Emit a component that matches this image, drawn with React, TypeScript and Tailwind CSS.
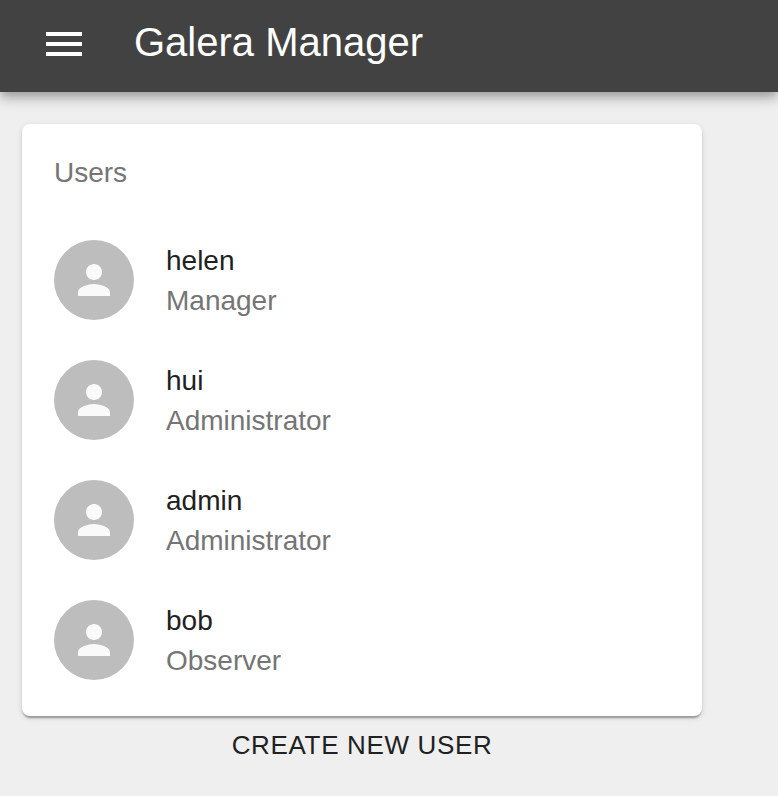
import { useState } from 'react';

const users = [
  { name: 'helen', role: 'Manager' },
  { name: 'hui', role: 'Administrator' },
  { name: 'admin', role: 'Administrator' },
  { name: 'bob', role: 'Observer' },
];

function MenuIcon() {
  return (
    <svg viewBox="0 0 24 24" className="size-12 fill-current" aria-hidden="true">
      <path d="M3 18h18v-2H3v2zm0-5h18v-2H3v2zm0-7v2h18V6H3z" />
    </svg>
  );
}

function PersonIcon() {
  return (
    <svg viewBox="0 0 24 24" className="size-12 fill-current" aria-hidden="true">
      <path d="M12 12c2.21 0 4-1.79 4-4s-1.79-4-4-4-4 1.79-4 4 1.79 4 4 4zm0 2c-2.67 0-8 1.34-8 4v2h16v-2c0-2.66-5.33-4-8-4z" />
    </svg>
  );
}

function UserRow({ name, role }: { name: string; role: string }) {
  return (
    <li className="flex h-30 items-center gap-8 px-8">
      <span className="flex size-20 shrink-0 items-center justify-center rounded-full bg-[#bdbdbd] text-[#fafafa]">
        <PersonIcon />
      </span>
      <div className="min-w-0 pt-0.5 text-[28px] leading-10">
        <p className="truncate text-[#212121]">{name}</p>
        <p className="truncate text-[#757575]">{role}</p>
      </div>
    </li>
  );
}

export default function App() {
  const [menuOpen, setMenuOpen] = useState(false);

  return (
    <div className="min-h-screen bg-[#efefef] font-['Liberation_Sans',Arial,sans-serif]">
      <header className="flex h-23 items-center bg-[#424242] px-10 pb-1 text-white shadow-[0_4px_8px_-2px_rgba(0,0,0,0.2),0_8px_10px_0_rgba(0,0,0,0.14),0_2px_20px_0_rgba(0,0,0,0.12)]">
        <button
          type="button"
          aria-label="Menu"
          aria-expanded={menuOpen}
          onClick={() => setMenuOpen(!menuOpen)}
        >
          <MenuIcon />
        </button>
        <h1 className="ml-[46px] pb-1 text-[40px] leading-14">Galera Manager</h1>
      </header>

      <main className="mr-[76px] ml-[22px] pt-8">
        <section className="rounded-lg bg-white pb-4 shadow-[0_4px_2px_-2px_rgba(0,0,0,0.2),0_2px_2px_0_rgba(0,0,0,0.14),0_2px_6px_0_rgba(0,0,0,0.12)]">
          <h2 className="px-8 pt-0.5 text-[28px] leading-[94px] text-[#757575]">Users</h2>
          <ul>
            {users.map((user) => (
              <UserRow key={user.name} name={user.name} role={user.role} />
            ))}
          </ul>
        </section>
        <button
          type="button"
          className="block w-full text-center text-[26px] leading-[58px] tracking-wide text-[#212121] uppercase"
        >
          Create new user
        </button>
      </main>
    </div>
  );
}
